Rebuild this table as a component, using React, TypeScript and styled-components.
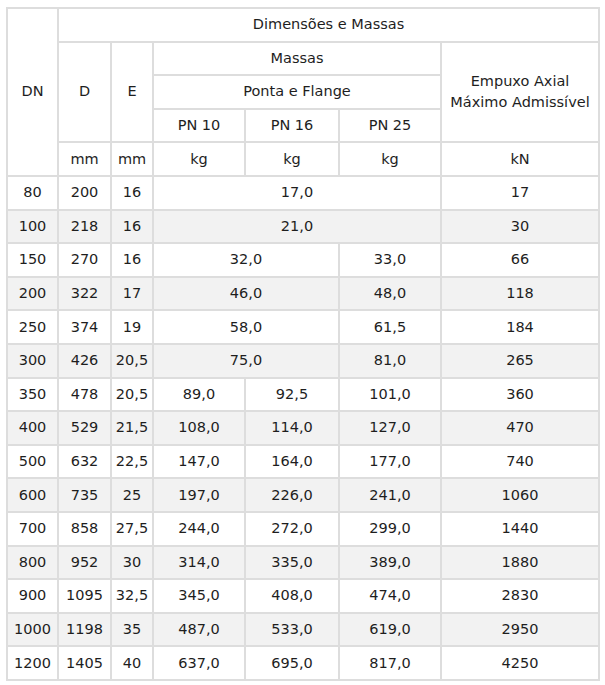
import { ReactElement } from 'react';
import styled, { createGlobalStyle } from 'styled-components';

const GlobalStyle = createGlobalStyle`
  html, body {
    margin: 0;
    padding: 0;
    background: #ffffff;
  }
`;

const Page = styled.div`
  padding: 7px 7px 0 6px;
  font-family: 'DejaVu Sans', 'Liberation Sans', sans-serif;
  font-size: 14.5px;
  color: #1e1e1e;
`;

const Table = styled.table`
  width: 592px;
  border-collapse: collapse;
  table-layout: fixed;
  border: 2px solid #cfcfcf;
`;

const Row = styled.tr<{ $shaded?: boolean }>`
  background: ${(p) => (p.$shaded ? '#f2f2f2' : '#ffffff')};
`;

const Cell = styled.td`
  height: 31.6px;
  padding: 0;
  border: 2px solid #dddddd;
  text-align: center;
  vertical-align: middle;
  line-height: 1.45;
  white-space: nowrap;
`;

const widths = [51, 53, 42, 92, 94, 102, 158];

type BodyRow = {
  dn: string;
  d: string;
  e: string;
  masses: { value: string; span: number }[];
  kn: string;
};

const m = (value: string, span = 1) => ({ value, span });

const rows: BodyRow[] = [
  { dn: '80', d: '200', e: '16', masses: [m('17,0', 3)], kn: '17' },
  { dn: '100', d: '218', e: '16', masses: [m('21,0', 3)], kn: '30' },
  { dn: '150', d: '270', e: '16', masses: [m('32,0', 2), m('33,0')], kn: '66' },
  { dn: '200', d: '322', e: '17', masses: [m('46,0', 2), m('48,0')], kn: '118' },
  { dn: '250', d: '374', e: '19', masses: [m('58,0', 2), m('61,5')], kn: '184' },
  { dn: '300', d: '426', e: '20,5', masses: [m('75,0', 2), m('81,0')], kn: '265' },
  { dn: '350', d: '478', e: '20,5', masses: [m('89,0'), m('92,5'), m('101,0')], kn: '360' },
  { dn: '400', d: '529', e: '21,5', masses: [m('108,0'), m('114,0'), m('127,0')], kn: '470' },
  { dn: '500', d: '632', e: '22,5', masses: [m('147,0'), m('164,0'), m('177,0')], kn: '740' },
  { dn: '600', d: '735', e: '25', masses: [m('197,0'), m('226,0'), m('241,0')], kn: '1060' },
  { dn: '700', d: '858', e: '27,5', masses: [m('244,0'), m('272,0'), m('299,0')], kn: '1440' },
  { dn: '800', d: '952', e: '30', masses: [m('314,0'), m('335,0'), m('389,0')], kn: '1880' },
  { dn: '900', d: '1095', e: '32,5', masses: [m('345,0'), m('408,0'), m('474,0')], kn: '2830' },
  { dn: '1000', d: '1198', e: '35', masses: [m('487,0'), m('533,0'), m('619,0')], kn: '2950' },
  { dn: '1200', d: '1405', e: '40', masses: [m('637,0'), m('695,0'), m('817,0')], kn: '4250' },
];

const App = (): ReactElement => {
  return (
    <Page>
      <GlobalStyle />
      <Table>
        <colgroup>
          {widths.map((w, i) => (
            <col key={i} style={{ width: w }} />
          ))}
        </colgroup>
        <tbody>
          <Row>
            <Cell rowSpan={5}>DN</Cell>
            <Cell colSpan={6}>Dimensões e Massas</Cell>
          </Row>
          <Row>
            <Cell rowSpan={3}>D</Cell>
            <Cell rowSpan={3}>E</Cell>
            <Cell colSpan={3}>Massas</Cell>
            <Cell rowSpan={3}>
              Empuxo Axial
              <br />
              Máximo Admissível
            </Cell>
          </Row>
          <Row>
            <Cell colSpan={3}>Ponta e Flange</Cell>
          </Row>
          <Row>
            <Cell>PN 10</Cell>
            <Cell>PN 16</Cell>
            <Cell>PN 25</Cell>
          </Row>
          <Row>
            <Cell>mm</Cell>
            <Cell>mm</Cell>
            <Cell>kg</Cell>
            <Cell>kg</Cell>
            <Cell>kg</Cell>
            <Cell>kN</Cell>
          </Row>
          {rows.map((r, i) => (
            <Row key={r.dn} $shaded={i % 2 === 1}>
              <Cell>{r.dn}</Cell>
              <Cell>{r.d}</Cell>
              <Cell>{r.e}</Cell>
              {r.masses.map((c, j) => (
                <Cell key={j} colSpan={c.span}>
                  {c.value}
                </Cell>
              ))}
              <Cell>{r.kn}</Cell>
            </Row>
          ))}
        </tbody>
      </Table>
    </Page>
  );
};

export default App;
